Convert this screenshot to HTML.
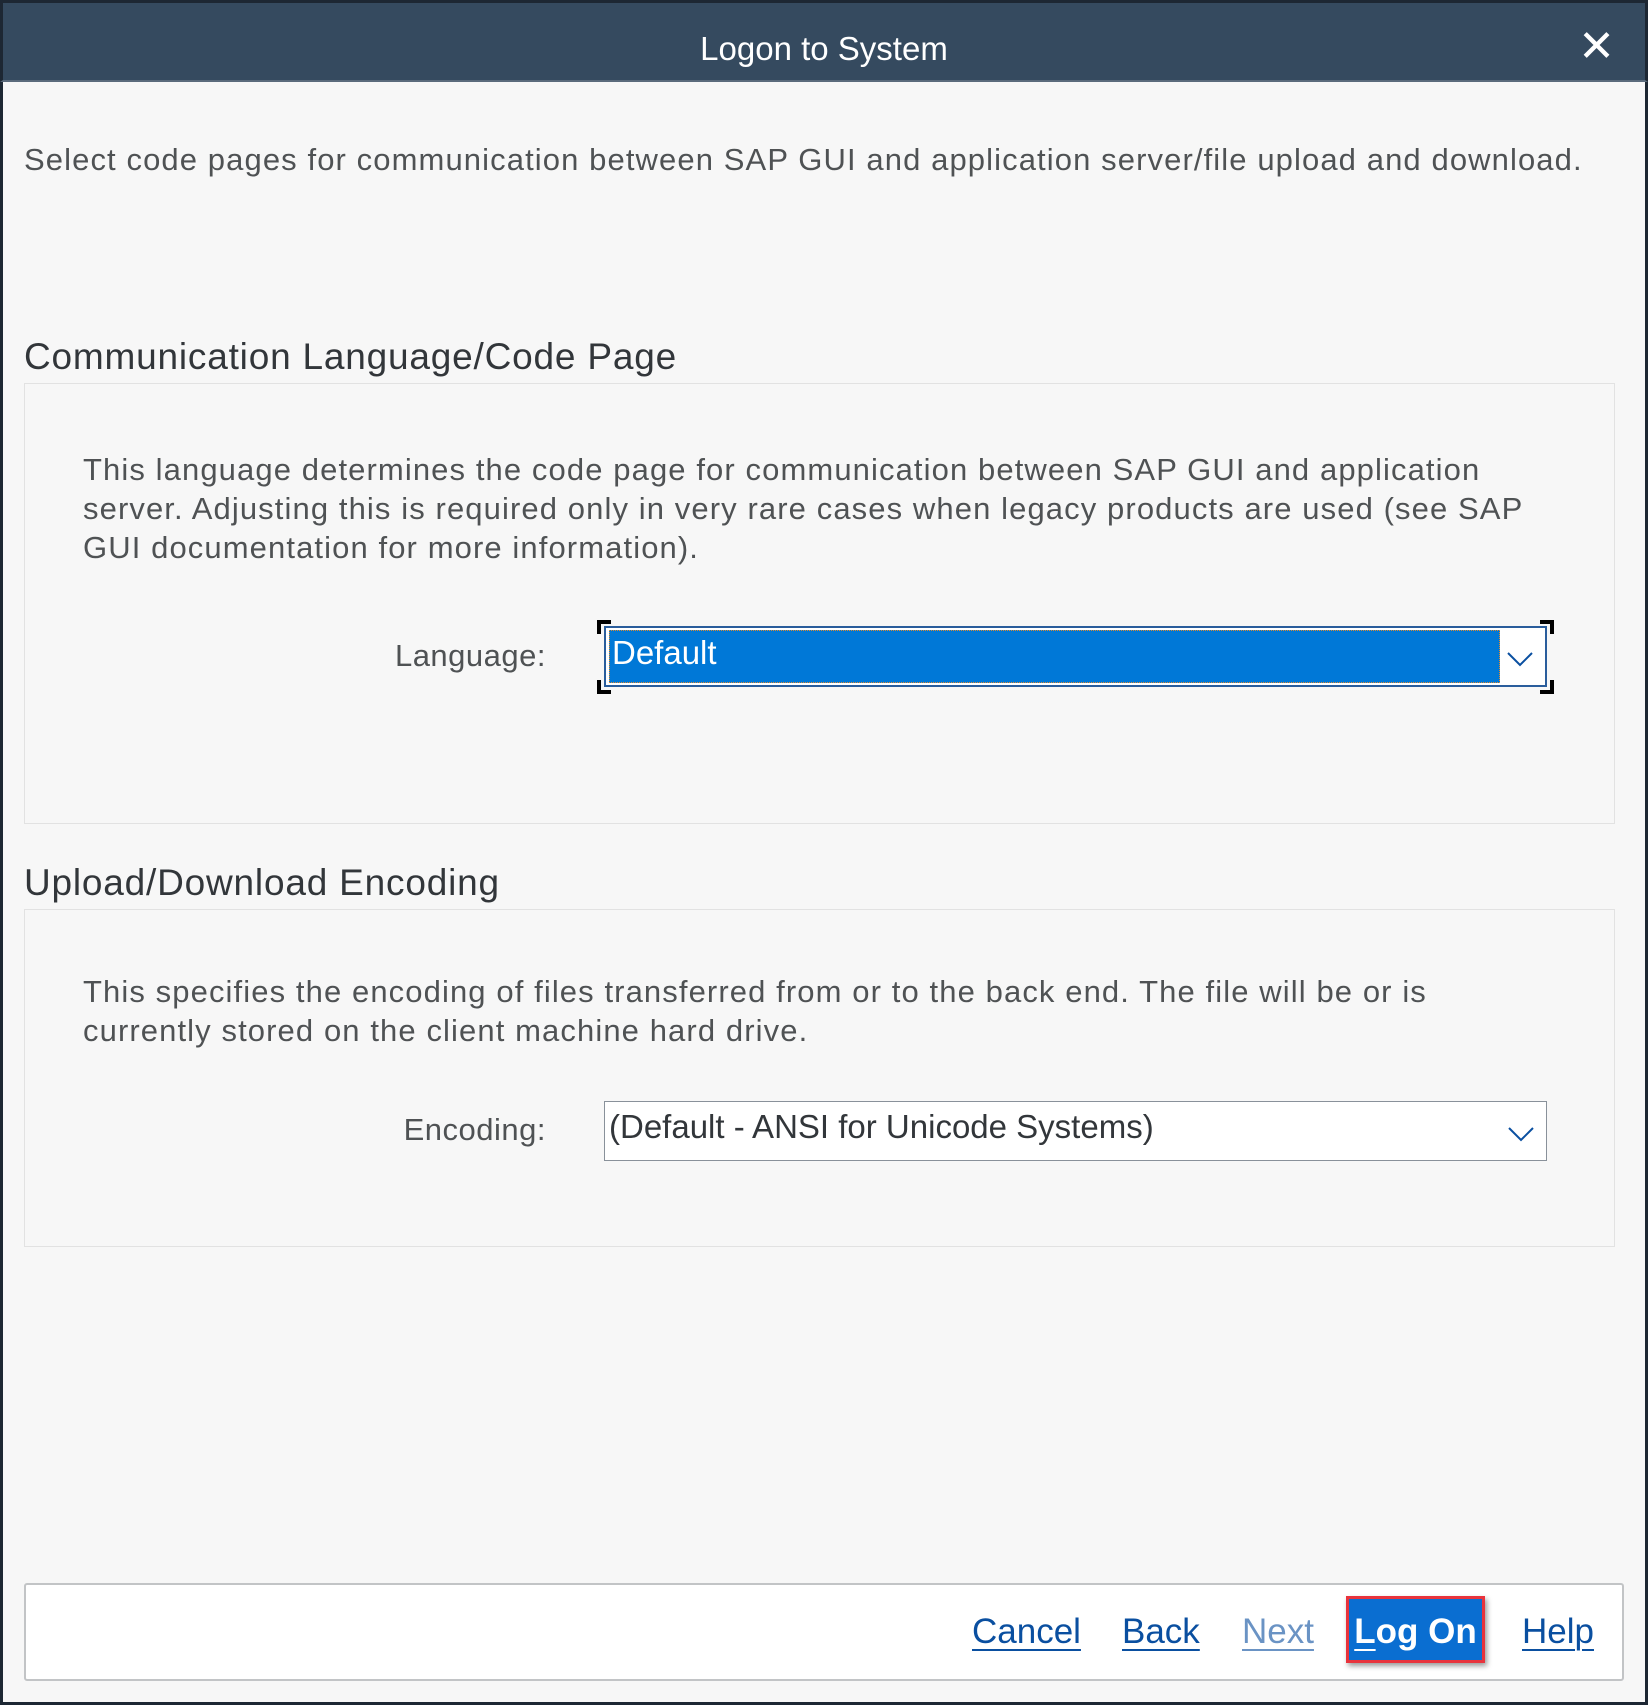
<!DOCTYPE html>
<html><head><style>
*{margin:0;padding:0;box-sizing:border-box}
body{width:1648px;height:1705px;background:#f7f7f7;font-family:"Liberation Sans",sans-serif;position:relative;overflow:hidden}
.frame{position:absolute;left:0;top:0;width:1648px;height:1705px;border:3px solid #1d2733;border-top:none}
.title{position:absolute;left:0;top:0;width:1648px;height:82px;background:#354a5f;color:#fff;font-size:33px;text-align:center;line-height:92px;border:3px solid #1d2733;border-bottom:2px solid #5b6b7c}
.x{position:absolute;right:30px;top:22px;color:#fff;font-size:44px;line-height:44px}
.t{position:absolute;color:#4f5254;font-size:31px;white-space:nowrap;letter-spacing:1.1px}
.h{position:absolute;color:#32363a;font-size:37px;white-space:nowrap;letter-spacing:0.8px}
.box{position:absolute;left:24px;width:1591px;border:1px solid #e2e2e2;background:#f7f7f7}
.dd{position:absolute;left:604px;width:943px;background:#fff;border:1px solid #89919a}
.chev{position:absolute;right:10px;width:30px;height:30px}
.btn{position:absolute;top:1632px;transform:translateY(-50%);font-size:35px;color:#0a4fa0;text-decoration:underline;text-decoration-thickness:2px;text-underline-offset:6px}
</style></head><body>
<div class="frame"></div>
<div class="title">Logon to System<span class="x">✕</span></div>
<div class="t" style="left:24px;top:142px">Select code pages for communication between SAP GUI and application server/file upload and download.</div>
<div class="h" style="left:24px;top:336px">Communication Language/Code Page</div>
<div class="box" style="top:383px;height:441px"></div>
<div class="t" style="left:83px;top:450px;line-height:39px">This language determines the code page for communication between SAP GUI and application<br>server. Adjusting this is required only in very rare cases when legacy products are used (see SAP<br>GUI documentation for more information).</div>
<div class="t" style="right:1102px;top:638px;letter-spacing:0.5px">Language:</div>
<div class="dd" style="top:626px;height:61px;border:2px solid #2a5d9c">
 <div style="position:absolute;left:3px;top:2px;width:891px;height:53px;background:#0078d7;border:1px dotted #e08a30;color:#fff;font-size:33px;line-height:44px;padding-left:2px">Default</div>
 <svg class="chev" style="top:15px" viewBox="0 0 30 30"><path d="M3 10 L15 22 L27 10" fill="none" stroke="#0a4fa0" stroke-width="2"/></svg>
</div>
<svg style="position:absolute;left:597px;top:620px" width="957" height="74"><g fill="none" stroke="#000" stroke-width="4"><path d="M2 14V2H14M943 2H955V14M2 60V72H14M943 72H955V60"/></g></svg>
<div class="h" style="left:24px;top:862px">Upload/Download Encoding</div>
<div class="box" style="top:909px;height:338px"></div>
<div class="t" style="left:83px;top:972px;line-height:39px">This specifies the encoding of files transferred from or to the back end. The file will be or is<br>currently stored on the client machine hard drive.</div>
<div class="t" style="right:1102px;top:1112px;letter-spacing:0.5px">Encoding:</div>
<div class="dd" style="top:1101px;height:60px">
 <div style="position:absolute;left:4px;top:6px;color:#32363a;font-size:33px;white-space:nowrap">(Default - ANSI for Unicode Systems)</div>
 <svg class="chev" style="top:16px" viewBox="0 0 30 30"><path d="M3 10 L15 22 L27 10" fill="none" stroke="#0a4fa0" stroke-width="2"/></svg>
</div>
<div style="position:absolute;left:24px;top:1583px;width:1600px;height:98px;background:#fff;border:2px solid #c2c4c6;border-radius:3px"></div>
<div class="btn" style="left:972px">Cancel</div>
<div class="btn" style="left:1122px">Back</div>
<div class="btn" style="left:1242px;color:#6a93c4">Next</div>
<div style="position:absolute;left:1346px;top:1596px;width:139px;height:67px;background:#0a6ed1;border:3px solid #e8333c;box-shadow:2px 3px 5px rgba(0,0,0,.4);color:#fff;font-weight:bold;font-size:35px;text-align:center;line-height:66px"><span style="text-decoration:underline;text-decoration-thickness:2px;text-underline-offset:6px">L</span>og On</div>
<div class="btn" style="left:1522px">Help</div>
</body></html>
